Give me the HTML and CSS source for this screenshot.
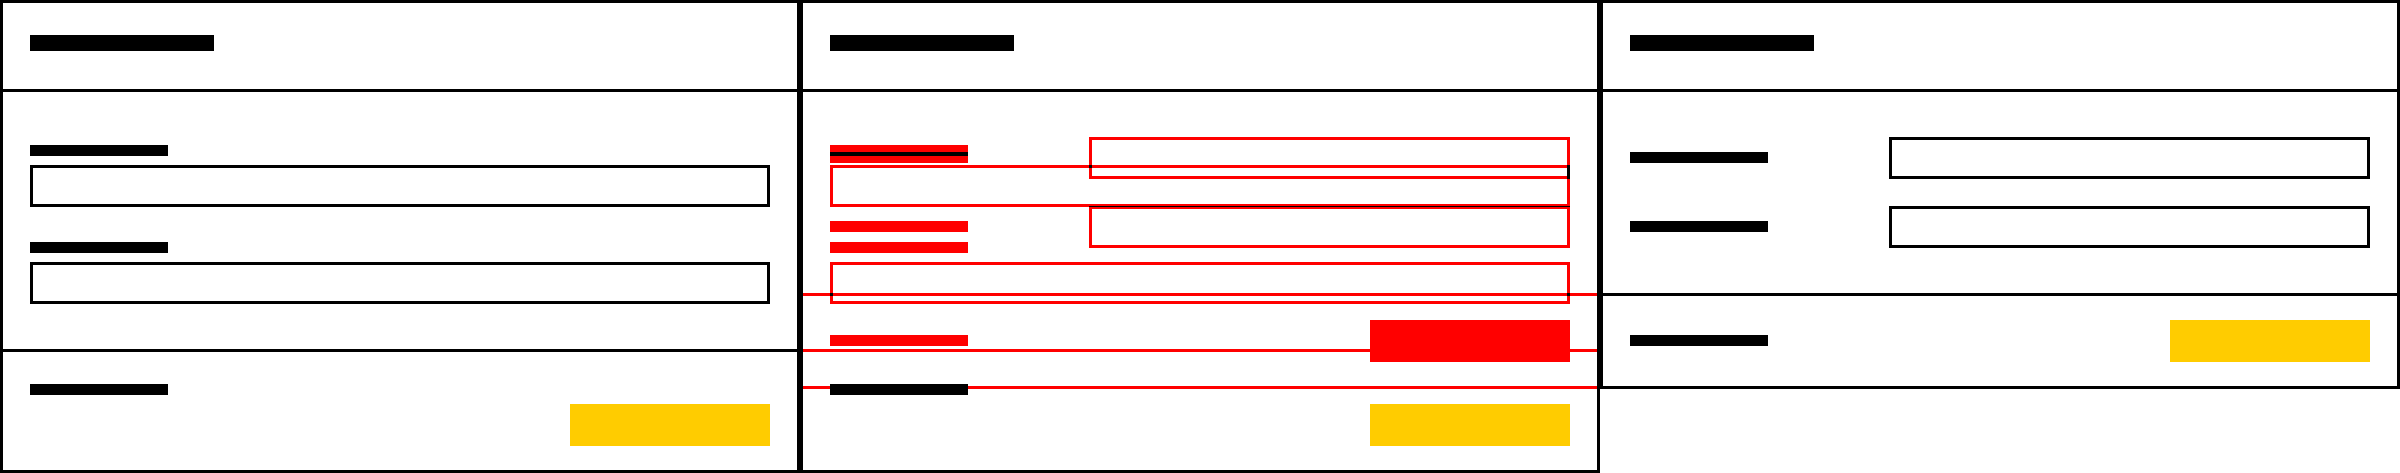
FILE: index.html
```html
<!DOCTYPE html>
<html lang="en">
<head>
<meta charset="utf-8">
<title>Form layout transition</title>
<link rel="stylesheet" href="styles.css">
</head>
<body>
<main class="board">

  <section class="card">
    <header class="card-head"><span class="bar bar-title"></span></header>
    <div class="card-body stack">
      <div class="field"><span class="bar bar-label"></span><input class="input" type="text"></div>
      <div class="field"><span class="bar bar-label"></span><input class="input" type="text"></div>
    </div>
    <footer class="card-foot stack-foot">
      <span class="bar bar-label"></span>
      <button class="btn" type="button"></button>
    </footer>
  </section>

  <section class="card card-diff">
    <header class="card-head"><span class="bar bar-title"></span></header>
    <div class="card-body stack diff-body">
      <div class="field"><span class="bar bar-label"></span><input class="input" type="text"></div>
      <div class="field"><span class="bar bar-label"></span><input class="input" type="text"></div>
    </div>
    <footer class="card-foot stack-foot">
      <span class="bar bar-label diff-keep"></span>
      <button class="btn" type="button"></button>
    </footer>
    <div class="ghost" aria-hidden="true">
      <div class="ghost-body inline-grid">
        <span class="bar bar-label ghost-label-first"></span>
        <div class="ghost-input ghost-input-1"></div>
        <span class="bar bar-label"></span>
        <div class="ghost-input ghost-input-2"></div>
      </div>
      <div class="ghost-foot inline-foot">
        <span class="bar bar-label"></span>
        <span class="ghost-btn"></span>
      </div>
    </div>
  </section>

  <section class="card">
    <header class="card-head"><span class="bar bar-title"></span></header>
    <div class="card-body inline-grid">
      <span class="bar bar-label"></span><input class="input" type="text">
      <span class="bar bar-label"></span><input class="input" type="text">
    </div>
    <footer class="card-foot inline-foot">
      <span class="bar bar-label"></span>
      <button class="btn" type="button"></button>
    </footer>
  </section>

</main>
</body>
</html>
```

FILE: styles.css
```css
* {
  box-sizing: border-box;
}

body {
  margin: 0;
  background: #fff;
  font-family: "Liberation Sans", Arial, sans-serif;
}

.board {
  display: flex;
  align-items: flex-start;
}

.card {
  flex: none;
  width: 800px;
  border: 3px solid #000;
  background: #fff;
  position: relative;
  display: flex;
  flex-direction: column;
}

.card-head {
  padding: 32px 27px 38px;
  border-bottom: 3px solid #000;
}

.bar {
  display: block;
  background: #000;
}

.bar-title {
  width: 184px;
  height: 16px;
}

.bar-label {
  width: 138px;
  height: 11px;
}

.card-body {
  border-bottom: 3px solid #000;
}

/* stacked layout */
.stack {
  padding: 53px 27px 45px;
  display: flex;
  flex-direction: column;
  gap: 35px;
}

.field {
  display: flex;
  flex-direction: column;
  gap: 9px;
}

.input {
  display: block;
  width: 100%;
  height: 42px;
  margin: 0;
  padding: 0;
  border: 3px solid #000;
  border-radius: 0;
  background: #fff;
  font: inherit;
  outline: none;
  appearance: none;
}

.stack-foot {
  padding: 32px 27px 24px;
  display: flex;
  flex-direction: column;
  align-items: flex-start;
  gap: 9px;
}

.btn {
  display: block;
  width: 200px;
  height: 42px;
  margin: 0;
  padding: 0;
  border: 0;
  border-radius: 0;
  background: #ffcc00;
}

.stack-foot .btn {
  align-self: flex-end;
}

/* inline layout */
.inline-grid {
  padding: 45px 27px;
  display: grid;
  grid-template-columns: 259px 481px;
  row-gap: 27px;
  align-items: start;
}

.inline-grid .bar-label {
  margin-top: 15px;
}

.inline-foot {
  padding: 24px 27px;
  display: flex;
  justify-content: space-between;
  align-items: flex-start;
}

.inline-foot .bar-label {
  margin-top: 15px;
}

/* diff card */
.diff-body {
  border-bottom-color: #f00;
}

.diff-body .bar-label {
  background: #f00;
}

.diff-body .input {
  border-color: #f00;
  background: transparent;
}

.diff-keep {
  position: relative;
  z-index: 1;
}

.ghost {
  position: absolute;
  top: 89px;
  left: 0;
  right: 0;
}

.ghost .bar-label {
  background: #f00;
}

.ghost .ghost-label-first {
  background: linear-gradient(#000 0 4px, #f00 4px);
}

.ghost-body {
  position: relative;
  border-bottom: 3px solid #f00;
}

.ghost-body::after {
  content: "";
  position: absolute;
  left: 27px;
  bottom: -3px;
  width: 3px;
  height: 3px;
  background: #000;
  box-shadow: 737px 0 0 #000;
}

.ghost-foot {
  border-bottom: 3px solid #f00;
}

.ghost-input {
  position: relative;
  height: 42px;
  border: 3px solid #f00;
}

.ghost-input-1::before {
  content: "";
  position: absolute;
  top: 25px;
  left: -3px;
  width: 3px;
  height: 3px;
  background: #000;
}

.ghost-input-1::after {
  content: "";
  position: absolute;
  top: 25px;
  right: -3px;
  bottom: -3px;
  width: 3px;
  background: #000;
}

.ghost-input-2::before {
  content: "";
  position: absolute;
  top: -3px;
  left: -3px;
  right: -3px;
  height: 1px;
  background: #000;
}

.ghost-btn {
  display: block;
  width: 200px;
  height: 42px;
  background: #f00;
}
```
